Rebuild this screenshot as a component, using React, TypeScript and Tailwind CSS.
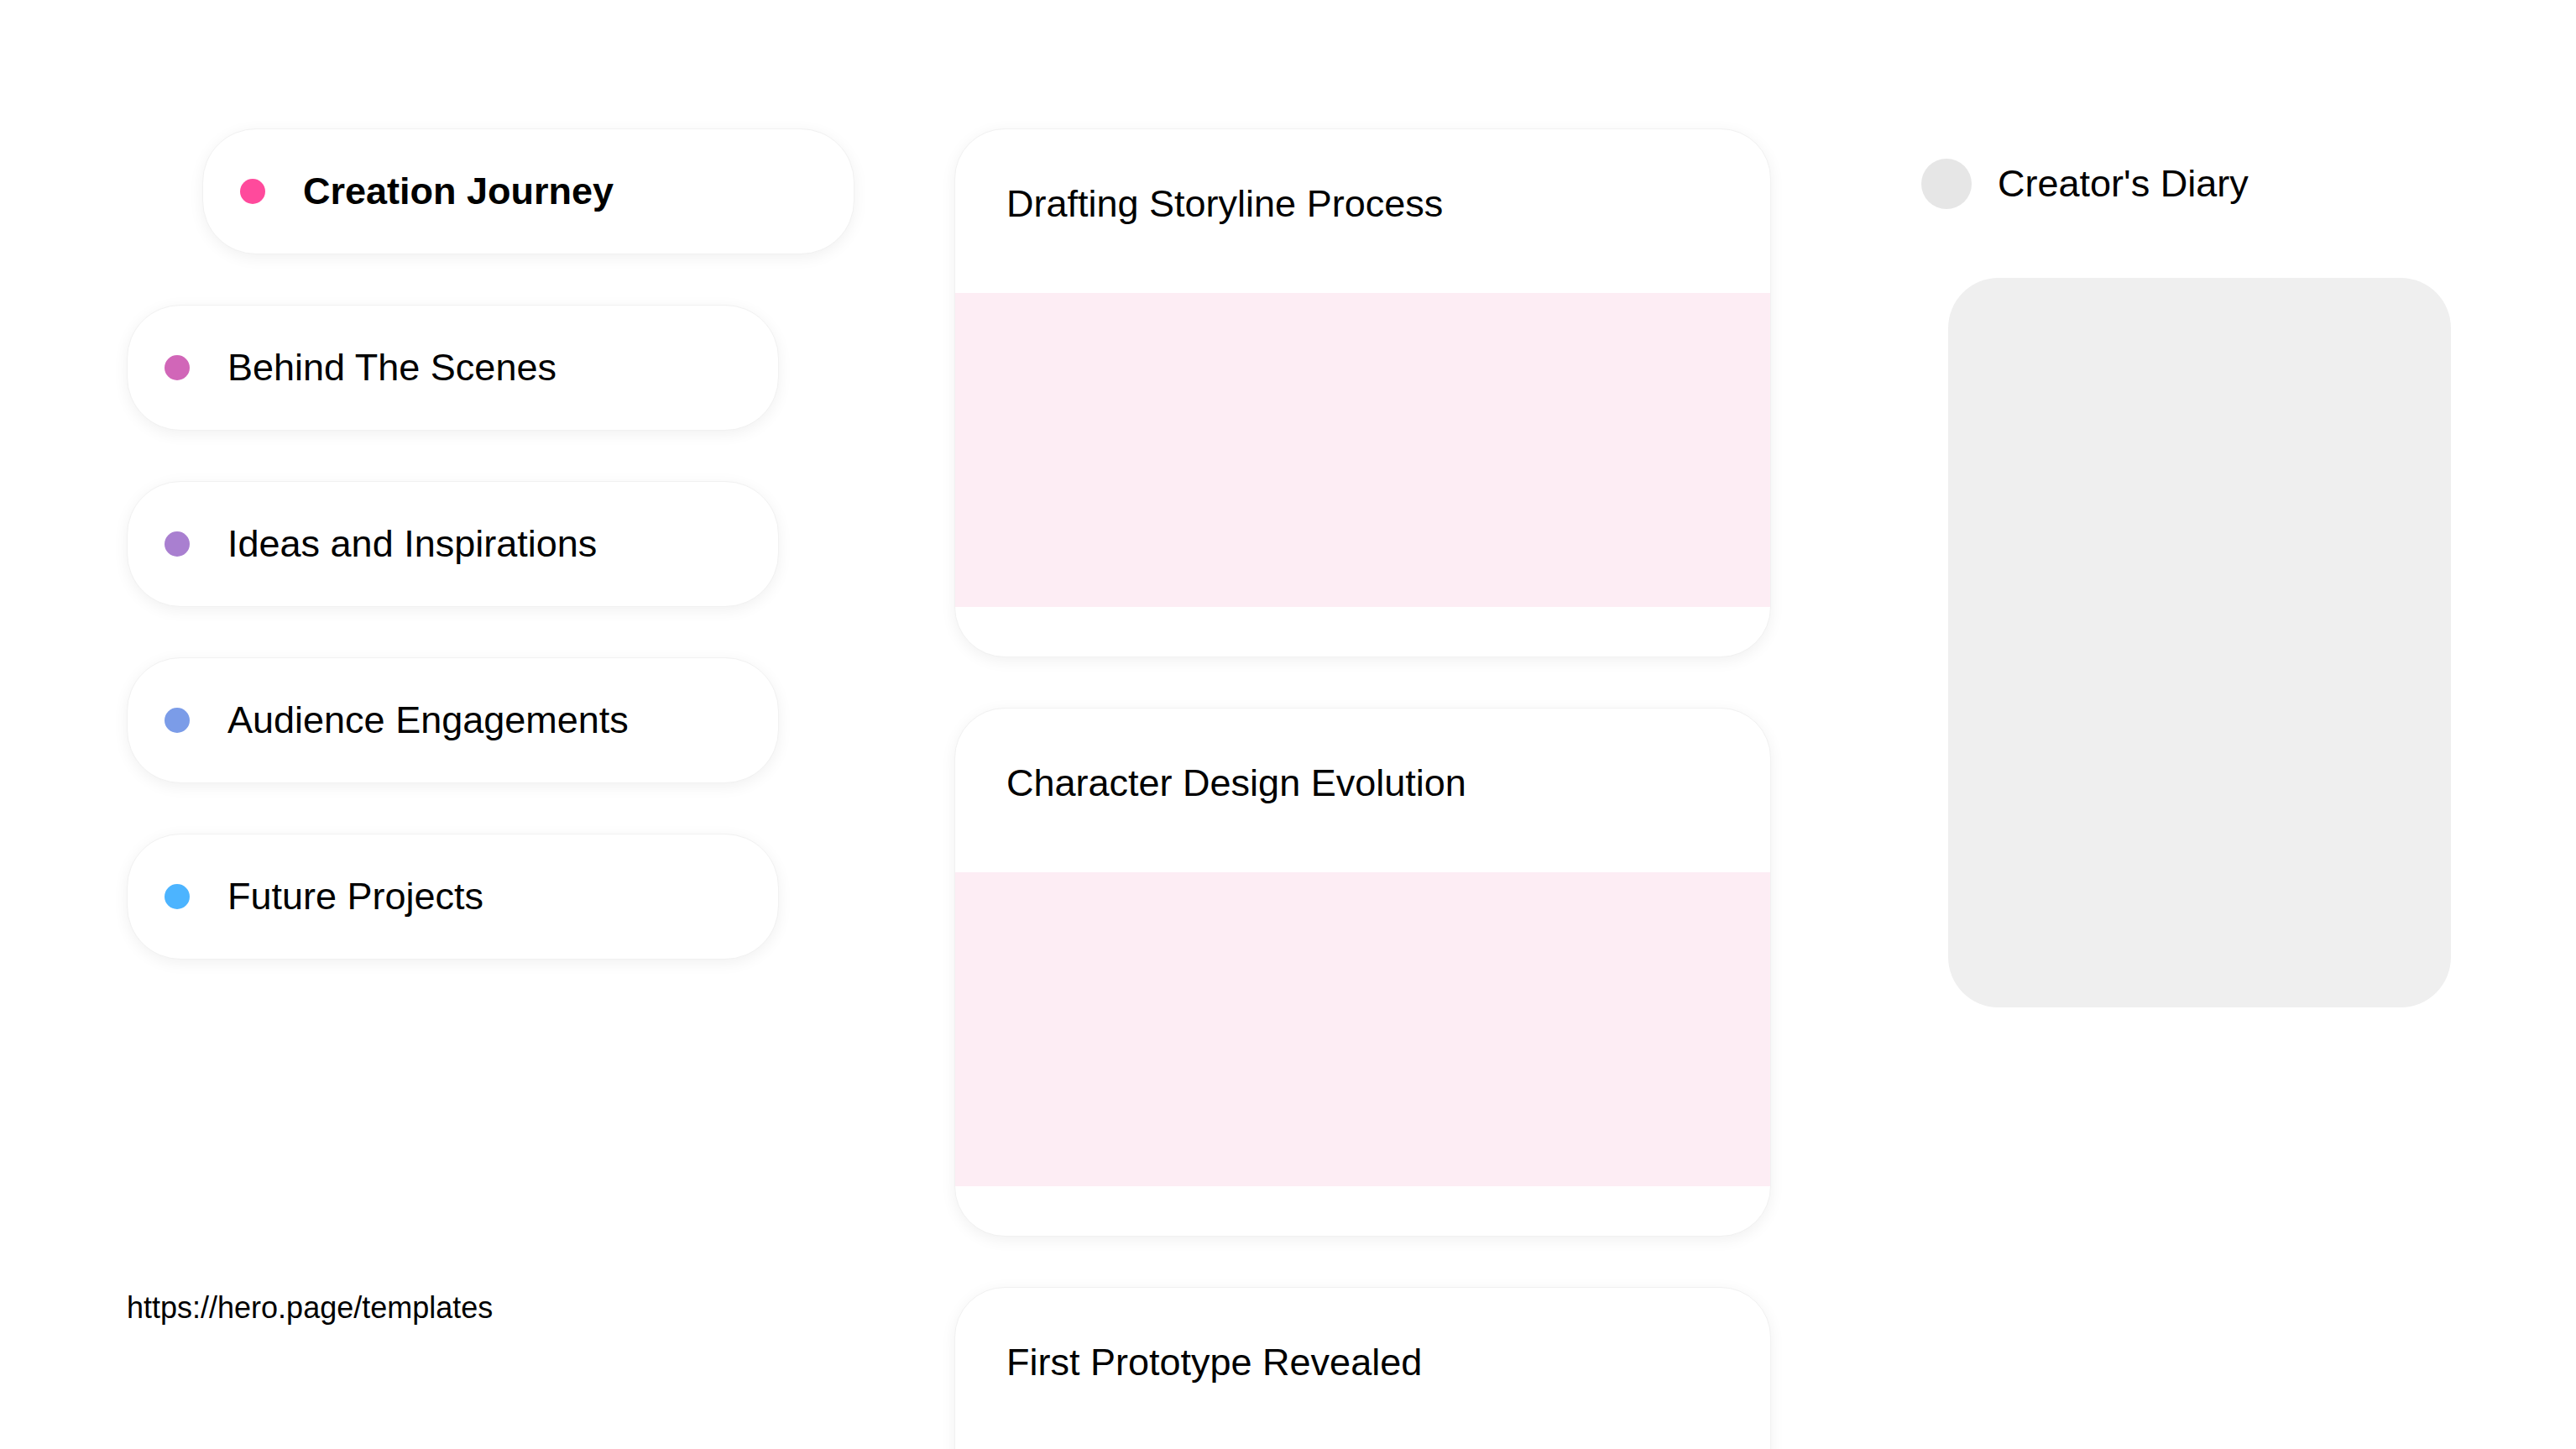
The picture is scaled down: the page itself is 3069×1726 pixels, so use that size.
const TOPICS = [
  { label: "Creation Journey", dot: "bg-[#ff4a9c]", active: true },
  { label: "Behind The Scenes", dot: "bg-[#d166b8]" },
  { label: "Ideas and Inspirations", dot: "bg-[#a97fd0]" },
  { label: "Audience Engagements", dot: "bg-[#7b9ce8]" },
  { label: "Future Projects", dot: "bg-[#4cb4ff]" },
];

const POSTS = ["Drafting Storyline Process", "Character Design Evolution", "First Prototype Revealed"];

const font = { fontFamily: '"Liberation Sans", Arial, sans-serif' };

export default function App() {
  return (
    <div
      className="flex h-[1726px] w-[3069px] overflow-hidden bg-white pl-[151px] pt-[153px] text-black"
      style={font}
    >
      {/* topics */}
      <div className="flex w-[867px] shrink-0 flex-col">
        <div className="flex flex-col gap-[60px]">
          {TOPICS.map((t) => (
            <div
              key={t.label}
              className={`flex h-[150px] w-[777px] items-center rounded-[64px] border border-[#f1f1f1] bg-white pl-[44px] shadow-[0_4px_18px_rgba(0,0,0,0.06)] ${
                t.active ? "ml-[90px]" : ""
              }`}
            >
              <span className={`size-[30px] shrink-0 rounded-full ${t.dot}`} />
              <span className={`ml-[45px] text-[45px] ${t.active ? "font-bold" : ""}`}>{t.label}</span>
            </div>
          ))}
        </div>
        <p className="mt-[388px] text-[36px]">https://hero.page/templates</p>
      </div>

      {/* posts */}
      <div className="ml-[119px] flex w-[973px] shrink-0 flex-col gap-[60px]">
        {POSTS.map((title) => (
          <div
            key={title}
            className="flex h-[630px] shrink-0 flex-col overflow-hidden rounded-[60px] border border-[#f1f1f1] bg-white shadow-[0_4px_18px_rgba(0,0,0,0.06)]"
          >
            <div className="h-[195px] shrink-0 pl-[61px] pt-[63px] text-[45px] leading-[52px]">{title}</div>
            <div className="h-[374px] shrink-0 bg-[#fdedf4]" />
          </div>
        ))}
      </div>

      {/* diary */}
      <div className="ml-[179px] flex w-[631px] shrink-0 flex-col pt-[32px]">
        <div className="flex items-center gap-[31px]">
          <span className="size-[60px] shrink-0 rounded-full bg-[#e6e6e6]" />
          <span className="text-[45px]">Creator's Diary</span>
        </div>
        <div className="ml-[32px] mt-[78px] h-[869px] w-[599px] rounded-[60px] bg-[#efefef]" />
      </div>
    </div>
  );
}
